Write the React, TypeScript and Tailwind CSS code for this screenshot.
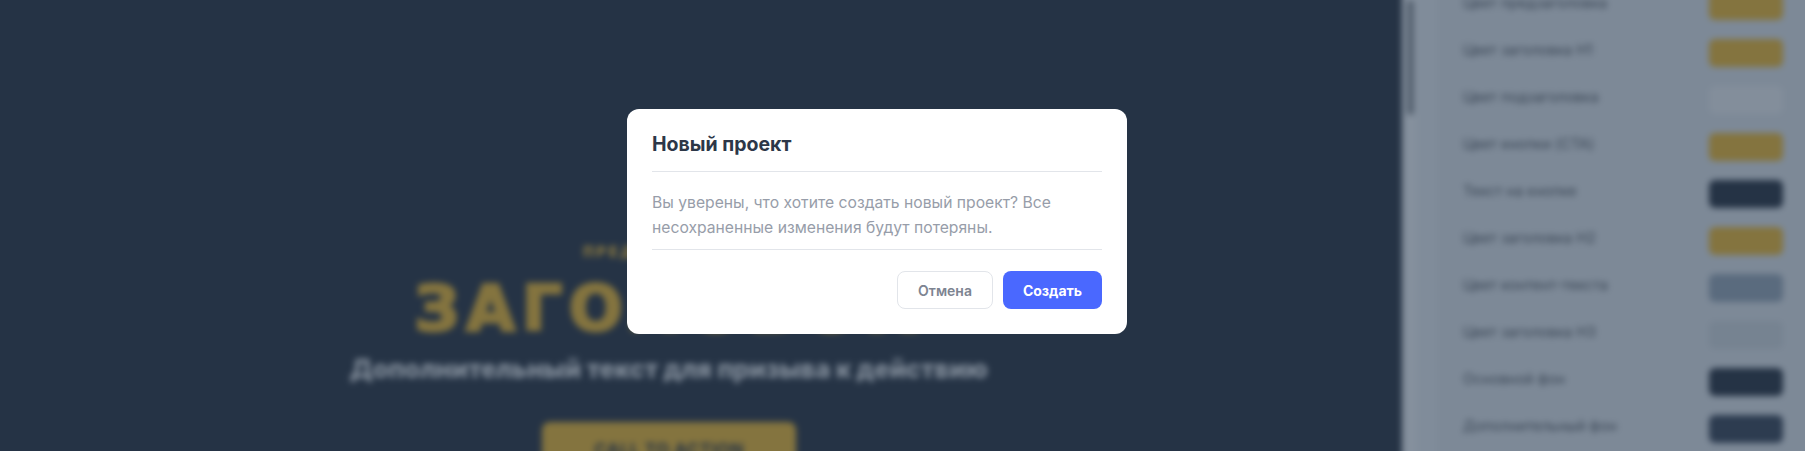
const colorRows = [
  { label: "Цвет предзаголовка", color: "bg-[#84743f]" },
  { label: "Цвет заголовка H1", color: "bg-[#84743f]" },
  { label: "Цвет подзаголовка", color: "bg-[#838e9b]" },
  { label: "Цвет кнопки (CTA)", color: "bg-[#84743f]" },
  { label: "Текст на кнопке", color: "bg-[#253345]" },
  { label: "Цвет заголовка H2", color: "bg-[#84743f]" },
  { label: "Цвет контент-текста", color: "bg-[#5a6b7e]" },
  { label: "Цвет заголовка H3", color: "bg-[#768391]" },
  { label: "Основной фон", color: "bg-[#253345]" },
  { label: "Дополнительный фон", color: "bg-[#2d3c50]" },
];

const font = "font-['Inter','Noto_Sans',sans-serif]";

const Preview = () => (
  <div className="w-[1412px] h-full bg-[#253345] flex flex-col items-center pl-[12px] pr-[66px] pt-[252px] shrink-0">
    <div className="mt-[1px] text-[14px] leading-[18px] font-black tracking-[3px] text-[#8a7942]">ПРЕДЗАГОЛОВОК</div>
    <h1 className="mt-[13px] font-['DejaVu_Sans',sans-serif] text-[63px] leading-[70px] font-bold tracking-[7px] [-webkit-text-stroke:3px_#84743f] text-[#84743f] whitespace-nowrap">
      ЗАГОЛОВОК
    </h1>
    <p className="mt-[9px] text-[25.5px] leading-[32px] font-extrabold text-[#838e9b] whitespace-nowrap">
      Дополнительный текст для призыва к действию
    </p>
    <div className="mt-[37px] w-[254px] h-[58px] shrink-0 rounded-lg bg-[#84743f] flex items-center justify-center text-[17px] tracking-[0.5px] font-bold text-[#253345]">
      CALL TO ACTION
    </div>
  </div>
);

const Settings = () => (
  <div className="flex-1 h-full flex bg-[#7d8997]">
    <div className="w-[15px] h-full bg-[#85909d] pl-[5px] pt-[10px] shrink-0">
      <div className="w-[7px] h-[115px] rounded-full bg-[#556170]" />
    </div>
    <div className="w-[20px] h-full bg-[#808c9a] shrink-0" />
    <div className="flex-1 flex flex-col gap-[19px] mt-[2px] pl-[26px] pr-[32px]">
      {colorRows.map((row) => (
        <div key={row.label} className="flex items-start justify-between h-7 shrink-0">
          <span className="text-[14.5px] leading-[21px] text-[#3a4655]">{row.label}</span>
          <div className={`w-[74px] h-7 rounded-md ${row.color}`} />
        </div>
      ))}
    </div>
  </div>
);

export default function App() {
  return (
    <div className={`relative w-screen h-screen overflow-hidden bg-[#253345] ${font}`}>
      <div className="flex w-[calc(100%+20px)] h-[calc(100%+20px)] -m-[10px] blur-[3px]">
        <Preview />
        <Settings />
      </div>

      <div className="absolute left-[627px] top-[109px] w-[500px] h-[225px] bg-white rounded-xl px-[25px] flex flex-col">
        <div className="h-[63px] flex items-center border-b border-[#e2e5ea] shrink-0">
          <h2 className="text-[19.5px] font-bold text-[#2d3748] pt-[10px]">Новый проект</h2>
        </div>
        <div className="h-[78px] flex items-center border-b border-[#e2e5ea] shrink-0 pt-[10px]">
          <p className="text-[15.7px] leading-[24.5px] text-[#979da9]">
            Вы уверены, что хотите создать новый проект? Все несохраненные изменения будут потеряны.
          </p>
        </div>
        <div className="flex justify-end gap-[10px] mt-[21px]">
          <button className="w-[96px] h-[38px] rounded-lg border border-[#e2e5ea] bg-white text-[14px] font-semibold text-[#7d8491]">
            Отмена
          </button>
          <button className="w-[99px] h-[38px] rounded-lg bg-[#4a68ff] text-[14px] font-bold text-white">
            Создать
          </button>
        </div>
      </div>
    </div>
  );
}
